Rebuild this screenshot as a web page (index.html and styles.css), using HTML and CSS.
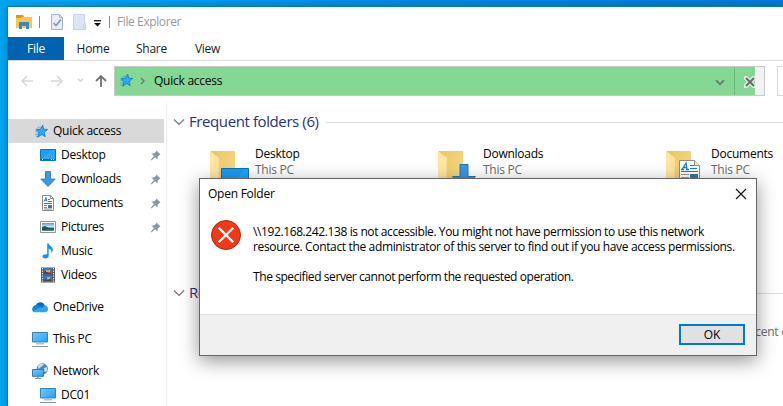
FILE: index.html
```
<!DOCTYPE html>
<html lang="en">
<head>
<meta charset="utf-8">
<title>File Explorer</title>
<link rel="stylesheet" href="styles.css">
</head>
<body>
<svg class="defs" width="0" height="0" aria-hidden="true">
  <defs>
    <linearGradient id="blue" x1="0" y1="0" x2="1" y2="1"><stop offset="0" stop-color="#72c9ff"/><stop offset="1" stop-color="#259ff5"/></linearGradient>
    <linearGradient id="front" x1="0" y1="0" x2="1" y2="1"><stop offset="0" stop-color="#e9c463"/><stop offset="1" stop-color="#ffe08a"/></linearGradient>
    <linearGradient id="sky" x1="0" y1="0" x2="0" y2="1"><stop offset="0" stop-color="#5b9be0"/><stop offset=".5" stop-color="#d6edf5"/><stop offset=".65" stop-color="#2f6a55"/><stop offset="1" stop-color="#4e93b0"/></linearGradient>
  </defs>
  <symbol id="star" viewBox="0 0 16 16"><path d="M3.500 3.500h4M2 5.500h4M1 7.500h4M2 9.500h3M1 11.500h4M2 13.500h3" stroke="#4d9fd6" stroke-width=".8"/><path d="M9.300 1.200l1 4.300 4.300.3-3.500 2.900.8 4.800-3.600-2.300-4.200 2.800 1.300-4.800-3-3.200 4.400-.3z" fill="#2da9f8" stroke="#1372b8" stroke-width=".8"/></symbol>
  <symbol id="desktop" viewBox="0 0 16 16"><path d="M.5 2.500h15v11H.5z" fill="#18a0fb" stroke="#0874bd"/><path d="M1 12L12 3h3v9z" fill="#35adff" opacity=".6"/><path d="M1 12.500h14" stroke="#075e9d"/><path d="M2 12.500h1M11 12.500h1M13 12.500h1" stroke="#fff"/></symbol>
  <symbol id="down" viewBox="0 0 16 16"><path d="M5.500.5h5v7.500h4.800L8 15.500.7 8h4.800z" fill="#3c96e0" stroke="#2577bd" stroke-width=".8"/></symbol>
  <symbol id="doc" viewBox="0 0 16 16"><path d="M2.500.5h8l3 3v12h-11z" fill="#fff" stroke="#8c8c8c"/><path d="M10.500.5v3h3" fill="none" stroke="#8c8c8c"/><path d="M4 6.500L6 2.500l1 4M5 5.200h2M8 4.500h2M8 6.500h4M4 8.500h8" fill="none" stroke="#1687ce"/><path d="M4 10.500h3M4 12.500h3M4 14h8" stroke="#888"/><path d="M8 10h4v3H8z" fill="#3c7f9c"/></symbol>
  <symbol id="pic" viewBox="0 0 16 16"><path d="M.5 2.500h15v11H.5z" fill="#fff" stroke="#969696"/><path d="M2 4h12v8H2z" fill="url(#sky)"/><path d="M2 8l3-1 4 2 5 .5v1L2 11z" fill="#255b3e"/></symbol>
  <symbol id="music" viewBox="0 0 16 16"><path d="M7.200.5h1.500c.4 2.200 4.300 3 4.100 6.500-.1 1.500-.7 2.700-1.500 3.300.5-2.800-.4-4.100-2.600-4.500v6.900c0 1.700-1.500 2.800-3.500 2.800-1.700 0-2.700-.8-2.700-2 0-1.700 2.200-2.700 4.700-2.200z" fill="#0c96f2"/></symbol>
  <symbol id="video" viewBox="0 0 16 16"><path d="M1 .5h14v15H1z" fill="#555"/><path d="M4 1h8v6.500H4zM4 8.500h8V15H4z" fill="#347bc7"/><path d="M4 5l3-2 5 4H4zM4 13l4-3 4 4H4z" fill="#3b4964"/><path d="M6 3h4v2H6zM7 10h3v2H7z" fill="#e7a931"/><path d="M8 5h3v1H8zM6 12h3v1H6z" fill="#c94e37"/><path d="M2.500 1v14M13.500 1v14" stroke="#eee" stroke-width="1.200" stroke-dasharray="1.200 1.300"/></symbol>
  <symbol id="cloud" viewBox="0 0 16 16"><path d="M4 6c1.500-3.500 7-4 8.500 0L9 10z" fill="#0864b8"/><path d="M.7 12.200C-.8 9 1.500 5.800 4.500 6L12 9z" fill="#1184dc"/><path d="M10 7.500C13 4.500 16.500 7.500 16 10.500c-.2 1.700-1.300 2.700-3 2.700H3c-1 0-1.900-.4-2.300-1z" fill="#29a7ef"/><path d="M5 6l5 3 3-2.600C12 6 11.500 6 10.500 6.800z" fill="#0f78cc"/></symbol>
  <symbol id="pc" viewBox="0 0 16 16"><path d="M.5 1.500h15v9.500H.5z" fill="url(#blue)" stroke="#3584b5"/><path d="M4 12.800h8" stroke="#8da4b3"/><path d="M0 15.500h16" stroke="#8d9eaa"/></symbol>
  <symbol id="net" viewBox="0 0 16 16"><circle cx="10.300" cy="6" r="5.700" fill="#4c8fac"/><path d="M6 2.500c2-2 5-2 6-1L9 4 6 6zM12 5l3-1 .5 4-3 1z" fill="#c2dfe8"/><path d="M.5 6.500h11v6.800H.5z" fill="url(#blue)" stroke="#2d7db1"/><path d="M3 15.500h6M5 14.300h2" stroke="#8597a5"/></symbol>
  <symbol id="pin" viewBox="0 0 12 12"><path d="M7 .5L11.500 5l-1.300.5L8.500 7.300 8 10.300 5.500 7.900 1.300 11.500.7 11l3.600-4.400L1.700 4l3.100-.4 1.800-1.700z" fill="#8b97a2"/></symbol>
  <symbol id="folder" viewBox="0 0 26 48"><path d="M1 0h24v48H1z" fill="url(#front)"/><path d="M0 0l9 7v41H0z" fill="#ffe7a1"/><path d="M9 7v41" stroke="#f3d37c"/></symbol>
  <symbol id="chev" viewBox="0 0 12 8"><path d="M1 1.500l5 5 5-5" fill="none" stroke="#777" stroke-width="1.200"/></symbol>
</svg>

<main class="window">
  <header class="titlebar">
    <svg class="app-icon" width="16" height="14" viewBox="0 0 16 14"><path d="M0 0h7l1 2h8v11H0z" fill="#f9c84b"/><path d="M0 0h7l1 2H6L5 3H0z" fill="#d99a0b"/><path d="M3 14V7h10v7h-3v-3H6v3z" fill="#3988cf"/></svg>
    <i class="rule"></i>
    <svg class="properties" width="12" height="16" viewBox="0 0 12 16"><path d="M.5.500h8l3 3v12H.5z" fill="#e7eef8" stroke="#a5b4ce"/><path d="M8.500.5v3h3" fill="none" stroke="#a5b4ce"/><path d="M2.500 9l2.500 2.500 5-6" fill="none" stroke="#8295b9" stroke-width="1.600"/></svg>
    <svg class="new-folder" width="13" height="16" viewBox="0 0 13 16"><path d="M.5.500h11v9h1v6H.5z" fill="#dce5f1" stroke="#c8d5e6"/><path d="M10.500 10v5" stroke="#c1cfe2"/></svg>
    <svg class="customize" width="7" height="7" viewBox="0 0 7 7"><path d="M0 .7h7" stroke="#111" stroke-width="1.300"/><path d="M0 3h7L3.500 6.500z" fill="#111"/></svg>
    <i class="rule"></i>
    <span class="app-name">File Explorer</span>
  </header>
  <nav class="tabs">
    <span class="tab file"><b>File</b></span><span class="tab home"><b>Home</b></span><span class="tab share"><b>Share</b></span><span class="tab view"><b>View</b></span>
  </nav>
  <div class="toolbar">
    <svg class="arrows" width="88" height="16" viewBox="0 0 88 16"><g fill="none" stroke="#d9d9d9" stroke-width="1.500"><path d="M13 8H2M7 3L2 8l5 5M31 8h11M37 3l5 5-5 5"/><path d="M58 5.800l2.500 2.500L63 5.800"/></g><path d="M81 14V3M76 8l5-5 5 5" fill="none" stroke="#757575" stroke-width="1.900"/></svg>
    <div class="address">
      <svg class="address-star" width="15" height="15"><use href="#star"/></svg>
      <svg class="crumb" width="6" height="8" viewBox="0 0 6 8"><path d="M1 1l3 3-3 3" fill="none" stroke="#777" stroke-width="1.500"/></svg>
      <span class="path">Quick access</span>
      <svg class="history" width="10" height="7" viewBox="0 0 10 7"><path d="M1 1.300l4 4 4-4" fill="none" stroke="#6d806f" stroke-width="2"/></svg>
      <span class="stop"><svg width="12" height="12" viewBox="0 0 12 12"><path d="M2 2l8 8M10 2l-8 8" stroke="#e5eee5" stroke-width="4.500" stroke-linecap="square"/><path d="M2 2l8 8M10 2l-8 8" stroke="#6b6b6b" stroke-width="2"/></svg></span>
    </div>
    <div class="search"></div>
  </div>
  <div class="content">
    <aside class="tree">
      <div class="node selected"><svg><use href="#star"/></svg><span>Quick access</span></div>
      <div class="node child"><svg><use href="#desktop"/></svg><span>Desktop</span><svg class="pin"><use href="#pin"/></svg></div>
      <div class="node child"><svg><use href="#down"/></svg><span>Downloads</span><svg class="pin"><use href="#pin"/></svg></div>
      <div class="node child"><svg><use href="#doc"/></svg><span>Documents</span><svg class="pin"><use href="#pin"/></svg></div>
      <div class="node child"><svg><use href="#pic"/></svg><span>Pictures</span><svg class="pin"><use href="#pin"/></svg></div>
      <div class="node child"><svg><use href="#music"/></svg><span>Music</span></div>
      <div class="node child"><svg><use href="#video"/></svg><span>Videos</span></div>
      <div class="node root"><svg><use href="#cloud"/></svg><span>OneDrive</span></div>
      <div class="node root"><svg><use href="#pc"/></svg><span>This PC</span></div>
      <div class="node root"><svg><use href="#net"/></svg><span>Network</span></div>
      <div class="node child"><svg><use href="#pc"/></svg><span>DC01</span></div>
    </aside>
    <section class="files">
      <div class="group"><svg width="12" height="8"><use href="#chev"/></svg><h2>Frequent folders (6)</h2><i></i></div>
      <div class="folders">
        <div class="folder"><div class="thumb"><svg class="back"><use href="#folder"/></svg><svg class="mark" width="28" height="24" viewBox="0 0 28 24"><path d="M.5.500h27v23H.5z" fill="#189cf5" stroke="#0c70b2"/><path d="M6 23L24 1h3v22z" fill="#35a9fa" opacity=".5"/></svg></div><p>Desktop<small>This PC</small></p></div>
        <div class="folder"><div class="thumb"><svg class="back"><use href="#folder"/></svg><svg class="mark arrow" width="24" height="26" viewBox="0 0 24 26"><path d="M8 .5h8v12h7.500L12 25 .5 12.500H8z" fill="#3c96e0" stroke="#2577bd"/></svg></div><p>Downloads<small>This PC</small></p></div>
        <div class="folder"><div class="thumb"><svg class="back"><use href="#folder"/></svg><svg class="mark paper" width="21" height="28" viewBox="0 0 21 28"><path d="M.5.500h15l5 5v22H.5z" fill="#fff" stroke="#8c8c8c"/><path d="M15.500.5v5h5" fill="#eee" stroke="#8c8c8c"/><path d="M3 9.500L7 3l1 6.500M5 7.500h3M2 9.500h3M7 9.500h3" fill="none" stroke="#1285cf" stroke-width="1.300"/><path d="M11 5.500h4M11 8.500h7M2 11.500h17" stroke="#1285cf"/><path d="M2 14.500h8M2 17.500h8" stroke="#999"/><path d="M11 14h8v6h-8z" fill="#3a7699"/></svg></div><p>Documents<small>This PC</small></p></div>
      </div>
      <div class="group recent"><svg width="12" height="8"><use href="#chev"/></svg><h2>Recent files (0)</h2><i></i></div>
      <div class="empty">recent ones here.</div>
    </section>
  </div>
</main>

<section class="dialog" role="dialog">
  <header><span>Open Folder</span><svg width="12" height="12" viewBox="0 0 12 12"><path d="M1 1l10 10M11 1L1 11" stroke="#111" stroke-width="1.100"/></svg></header>
  <div class="message">
    <svg width="30" height="30" viewBox="0 0 30 30"><circle cx="15" cy="15" r="14.500" fill="#f03a17" stroke="#a92b16"/><path d="M7.700 7.700l14.600 14.600M22.300 7.700L7.700 22.300" stroke="#fff" stroke-width="2.300"/></svg>
    <div class="text"><span class="line one">\\192.168.242.138 is not accessible. You might not have permission to use this network</span><span class="line two">resource. Contact the administrator of this server to find out if you have access permissions.</span><span class="line three">The specified server cannot perform the requested operation.</span></div>
  </div>
  <footer><button>OK</button></footer>
</section>
</body>
</html>
```
FILE: styles.css
```
* { box-sizing: border-box; }
body {
  margin: 0;
  width: 783px;
  height: 406px;
  overflow: hidden;
  padding: 7px 0 0 8px;
  background: linear-gradient(90deg, #00a3ee 0, #009aea 160px, #0087dc 420px, #0078d0 783px);
  color: #000;
  font: 12px/16px "Open Sans", "Noto Sans", sans-serif;
  letter-spacing: -.25px;
  white-space: nowrap;
}
svg { display: block; flex: none; }
.defs { position: absolute; }
.window { height: 399px; background: #fff; overflow: hidden; box-shadow: 0 0 0 1px #087eb7, 0 0 6px rgba(0, 50, 90, .4); }
.titlebar { height: 30px; display: flex; align-items: center; padding-left: 8px; }
.rule { width: 1px; height: 12px; background: #888; }
.app-icon + .rule { margin-left: 7px; }
.properties { margin-left: 11px; }
.new-folder { margin-left: 10px; }
.customize { margin: 2px 8px 0 8px; }
.app-name { margin-left: 7px; color: #999; letter-spacing: -.4px; }
.tabs { display: flex; height: 24px; border-bottom: 1px solid #dadbdc; }
.tab { line-height: 24px; text-align: center; color: #222; }
.tab b { font-weight: 400; }
.file { width: 56px; height: 23px; background: #0063b1; color: #fff; }
.home { width: 58px; }
.share { width: 59px; }
.view { width: 53px; }
.toolbar { height: 42px; display: flex; padding-top: 5px; }
.arrows { margin: 7px 0 0 12px; }
.address { width: 651px; height: 30px; margin-left: 6px; border: 1px solid #c9c9c9; background: linear-gradient(90deg, #84d894 640px, #f2f2f2 640px); display: flex; align-items: center; flex: none; }
.address-star { margin: -2px 0 0 4px; }
.crumb { margin-left: 6px; }
.path { margin-left: 8px; flex: 1; }
.history { margin: 2px 9px 0 0; }
.stop { width: 30px; height: 28px; border-left: 1px solid #68b879; display: flex; align-items: center; padding: 2px 0 0 9px; }
.search { margin-left: 12px; height: 30px; width: 40px; flex: none; border: 1px solid #d9d9d9; }
.content { display: flex; height: 303px; }
.tree { width: 159px; border-right: 1px solid #eee; padding-top: 16px; flex: none; }
.node { width: 156px; height: 24px; display: flex; align-items: center; padding-left: 24px; }
.node svg { width: 16px; height: 16px; }
.node span { margin-left: 5px; flex: 1; }
.node.selected { padding-left: 26px; background: #d9d9d9; }
.node.selected svg { width: 15px; height: 15px; }
.node.selected span { margin-left: 4px; }
.node.child { padding-left: 32px; }
.node.root { margin-top: 8px; }
.node .pin { width: 11px; height: 11px; margin-right: 3px; }
.files { flex: 1; min-width: 0; overflow: hidden; padding: 8px 0 0 6px; }
.group { display: flex; align-items: center; height: 22px; }
.group h2 { font-size: 15px; line-height: 22px; font-weight: 400; letter-spacing: -.4px; color: #1e3287; margin: -2px 7px 0 4px; }
.group svg { margin-top: -1px; }
.group i { flex: 1; height: 1px; background: #dedede; }
.folders { display: flex; height: 149px; padding: 18px 0 0 37px; }
.folder { display: flex; width: 228px; flex: none; }
.thumb { position: relative; width: 45px; height: 48px; }
.back { width: 26px; height: 48px; }
.mark { position: absolute; left: 11px; top: 17px; }
.mark.arrow { left: 14px; top: 13px; }
.mark.paper { left: 13px; top: 9px; }
.folder p { margin: -5px 0 0; }
.folder small { display: block; font-size: 12px; color: #6d6d6d; }
.empty { margin: 20px 0 0 571px; color: #6d6d6d; }
.dialog { position: absolute; left: 199px; top: 178px; width: 558px; height: 178px; background: #fff; border: 1px solid #666; box-shadow: 0 5px 18px rgba(0, 0, 0, .42); }
.dialog header { height: 30px; display: flex; align-items: center; justify-content: space-between; padding: 0 9px 0 8px; }
.message { display: flex; height: 105px; padding: 11px 0 0 11px; }
.text { margin: 4px 0 0 12px; }
.line { display: block; line-height: 15px; }
.line.one { letter-spacing: -.39px; }
.line.two { letter-spacing: -.35px; }
.line.three { margin-top: 15px; letter-spacing: -.42px; }
.dialog footer { height: 41px; background: #f0f0f0; border-top: 1px solid #dfdfdf; display: flex; justify-content: flex-end; padding: 9px 11px 0 0; }
button { width: 66px; height: 21px; border: 2px solid #0078d7; background: #e1e1e1; color: #000; padding: 0; font: inherit; line-height: 17px; letter-spacing: -.2px; }
```
